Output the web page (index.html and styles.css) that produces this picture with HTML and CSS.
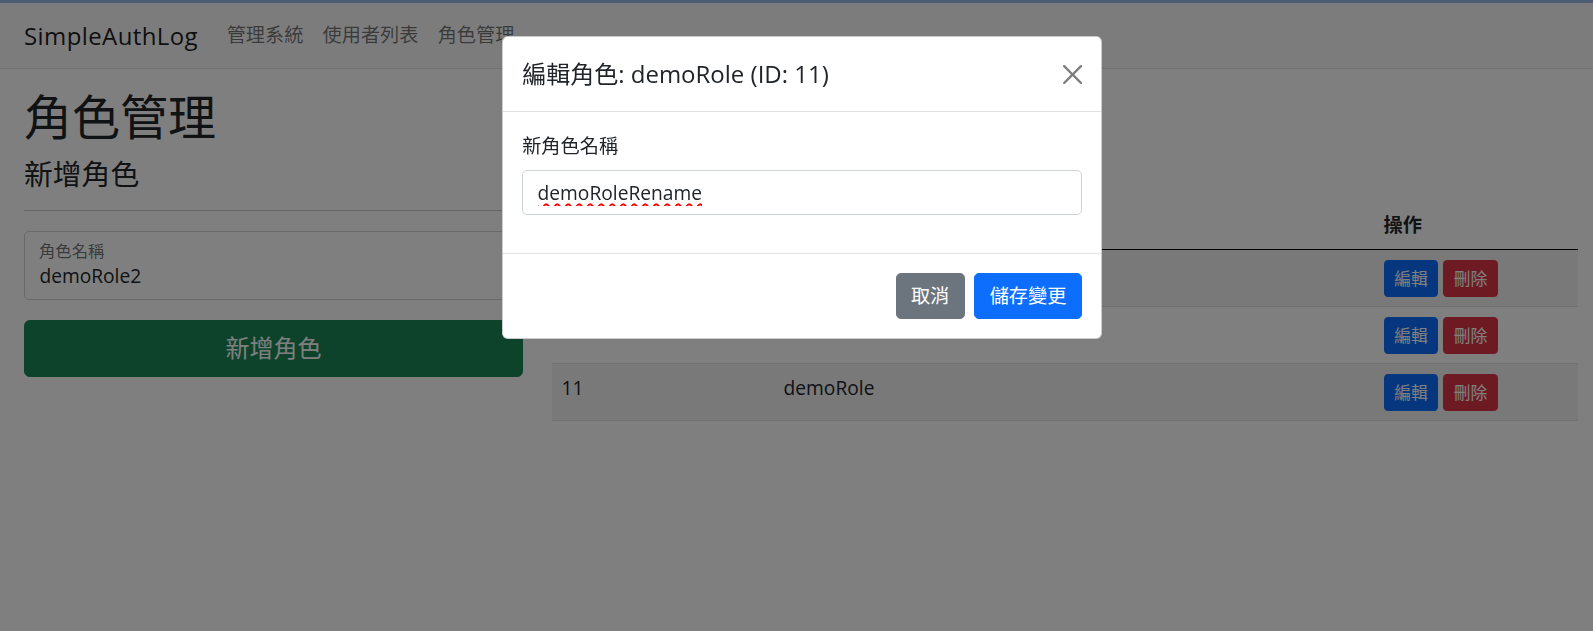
FILE: index.html
```html
<!DOCTYPE html>
<html lang="zh-Hant">
<head>
<meta charset="utf-8">
<title>角色管理 - SimpleAuthLog</title>
<link rel="stylesheet" href="styles.css">
</head>
<body>
  <div class="topstrip"></div>
  <nav class="navbar">
    <a class="brand" href="#">SimpleAuthLog</a>
    <ul class="nav">
      <li><a class="nav-link" href="#">管理系統</a></li>
      <li><a class="nav-link" href="#">使用者列表</a></li>
      <li><a class="nav-link" href="#">角色管理</a></li>
    </ul>
  </nav>

  <main class="page">
    <h1 class="page-title">角色管理</h1>
    <div class="cols">
      <section class="col-left">
        <h4 class="section-title">新增角色</h4>
        <hr class="divider">
        <form class="create-form">
          <div class="floating">
            <input class="floating-input" type="text" value="demoRole2">
            <label class="floating-label">角色名稱</label>
          </div>
          <button type="button" class="btn btn-lg btn-success btn-block">新增角色</button>
        </form>
      </section>
      <section class="col-right">
        <table class="table">
          <thead>
            <tr>
              <th class="c-id">ID</th>
              <th class="c-name">角色名稱</th>
              <th class="c-act">操作</th>
            </tr>
          </thead>
          <tbody>
            <tr>
              <td>1</td>
              <td>Admin</td>
              <td><div class="actions"><button class="btn btn-sm btn-primary">編輯</button><button class="btn btn-sm btn-danger">刪除</button></div></td>
            </tr>
            <tr>
              <td>2</td>
              <td>User</td>
              <td><div class="actions"><button class="btn btn-sm btn-primary">編輯</button><button class="btn btn-sm btn-danger">刪除</button></div></td>
            </tr>
            <tr>
              <td>11</td>
              <td>demoRole</td>
              <td><div class="actions"><button class="btn btn-sm btn-primary">編輯</button><button class="btn btn-sm btn-danger">刪除</button></div></td>
            </tr>
          </tbody>
        </table>
      </section>
    </div>
  </main>

  <div class="backdrop"></div>
  <div class="modal">
    <div class="modal-dialog">
      <div class="modal-content">
        <div class="modal-header">
          <h5 class="modal-title">編輯角色: demoRole (ID: 11)</h5>
          <button type="button" class="btn-close" aria-label="Close">
            <svg viewBox="0 0 16 16" width="19.2" height="19.2" aria-hidden="true"><path d="M.293.293a1 1 0 0 1 1.414 0L8 6.586 14.293.293a1 1 0 1 1 1.414 1.414L9.414 8l6.293 6.293a1 1 0 0 1-1.414 1.414L8 9.414l-6.293 6.293a1 1 0 0 1-1.414-1.414L6.586 8 .293 1.707a1 1 0 0 1 0-1.414z" fill="#000"/></svg>
          </button>
        </div>
        <div class="modal-body">
          <label class="form-label" for="newName">新角色名稱</label>
          <input id="newName" class="form-control spell" type="text" value="demoRoleRename">
        </div>
        <div class="modal-footer">
          <button type="button" class="btn btn-secondary">取消</button>
          <button type="button" class="btn btn-primary">儲存變更</button>
        </div>
      </div>
    </div>
  </div>
</body>
</html>
```

FILE: styles.css
```css
* { box-sizing: border-box; }

html, body { height: 100%; }

body {
  margin: 0;
  font-family: "Open Sans", "Noto Sans CJK TC", sans-serif;
  font-size: 19.2px;
  line-height: 1.5;
  color: #212529;
  background: #fff;
  overflow: hidden;
}

.topstrip {
  height: 3px;
  background: #98b6e8;
}

.navbar {
  height: 66px;
  display: flex;
  align-items: center;
  padding: 0 24px;
  background: #f8f9fa;
  border-bottom: 1px solid #dee2e6;
}

.brand {
  font-size: 24px;
  line-height: 36px;
  letter-spacing: .4px;
  color: rgba(0, 0, 0, .9);
  text-decoration: none;
  margin-right: 19px;
}

.nav {
  display: flex;
  list-style: none;
  margin: 0;
  padding: 0;
}

.nav-link {
  display: block;
  padding: 9.6px;
  color: rgba(0, 0, 0, .55);
  text-decoration: none;
  line-height: 28.8px;
}

.page {
  padding: 19px 15px 0 24px;
}

.page-title {
  font-size: 48px;
  line-height: 1.2;
  font-weight: 400;
  margin: 0 0 11.6px;
}

.cols {
  display: grid;
  grid-template-columns: 499px 1026px;
  column-gap: 29px;
  align-items: start;
}

.col-right {
  padding-top: 44.2px;
}

.section-title {
  font-size: 28.8px;
  line-height: 1.2;
  font-weight: 400;
  margin: 0 0 9.6px;
}

.divider {
  height: 0;
  margin: 18px 0 20px;
  border: 0;
  border-top: 1px solid #212529;
  opacity: .25;
}

.floating {
  position: relative;
  margin-bottom: 19.2px;
}

.floating-input {
  display: block;
  width: 100%;
  height: 69.6px;
  padding: 31.2px 14.4px 12px;
  font: inherit;
  line-height: 24px;
  color: #212529;
  background: #fff;
  border: 1px solid #ced4da;
  border-radius: 4.8px;
  outline: none;
}

.floating-label {
  position: absolute;
  top: 8px;
  left: 15px;
  font-size: 16.32px;
  line-height: 24.5px;
  color: rgba(33, 37, 41, .65);
  pointer-events: none;
}

.btn {
  display: inline-block;
  font-family: inherit;
  font-size: 19.2px;
  line-height: 28.8px;
  padding: 7.2px 14.4px;
  border: 1px solid transparent;
  border-radius: 4.8px;
  color: #fff;
  cursor: pointer;
  text-align: center;
}

.btn-lg {
  font-size: 24px;
  line-height: 36px;
  padding: 9.6px 19.2px;
  border-radius: 5.76px;
}

.btn-sm {
  font-size: 16.8px;
  line-height: 25.2px;
  padding: 4.8px 9.6px;
  border-radius: 3.84px;
}

.btn-block { display: block; width: 100%; }

.btn-success { background: #198754; border-color: #198754; }
.btn-primary { background: #0d6efd; border-color: #0d6efd; }
.btn-danger { background: #dc3545; border-color: #dc3545; }
.btn-secondary { background: #6c757d; border-color: #6c757d; }

.table {
  width: 100%;
  border-collapse: collapse;
  table-layout: fixed;
  vertical-align: top;
}

.table th,
.table td {
  padding: 9.6px;
  text-align: left;
  vertical-align: top;
  border-bottom: 1px solid #dee2e6;
}

.table thead th {
  font-weight: 700;
  border-bottom: 1px solid #000;
}

.table tbody tr:nth-child(odd) td {
  background: rgba(0, 0, 0, .05);
}

.c-id { width: 222px; }
.c-name { width: 600px; }
.c-act { width: 204px; }

.actions {
  display: flex;
  gap: 4.8px;
}

.backdrop {
  position: fixed;
  inset: 0;
  background: rgba(0, 0, 0, .5);
}

.modal {
  position: fixed;
  inset: 0;
  padding-left: 11px;
}

.modal-dialog {
  width: 600px;
  margin: 36px auto 0;
}

.modal-content {
  background: #fff;
  border: 1px solid rgba(0, 0, 0, .2);
  border-radius: 5.76px;
}

.modal-header {
  display: flex;
  align-items: center;
  justify-content: space-between;
  padding: 19.2px;
  border-bottom: 1px solid #dee2e6;
}

.modal-title {
  margin: 0;
  font-size: 24px;
  line-height: 36px;
  font-weight: 400;
}

.btn-close {
  display: flex;
  padding: 9.6px;
  margin: -9.6px -9.6px -9.6px auto;
  border: 0;
  background: transparent;
  opacity: .5;
  cursor: pointer;
}

.modal-body {
  padding: 19.2px 19.2px 38.6px;
}

.form-label {
  display: block;
  margin-bottom: 9.6px;
  line-height: 28.8px;
}

.form-control {
  display: block;
  width: 100%;
  height: 44.6px;
  padding: 6.6px 14.4px;
  font: inherit;
  line-height: 28.8px;
  color: #212529;
  background: #fff;
  border: 1px solid #ced4da;
  border-radius: 4.8px;
  outline: none;
}

.spell {
  text-decoration: underline wavy #ff0000;
  text-decoration-thickness: 1.5px;
  text-underline-offset: 3px;
}

.modal-footer {
  display: flex;
  align-items: center;
  justify-content: flex-end;
  padding: 14.4px;
  border-top: 1px solid #dee2e6;
}

.modal-footer .btn {
  margin: 4.8px;
}
```
